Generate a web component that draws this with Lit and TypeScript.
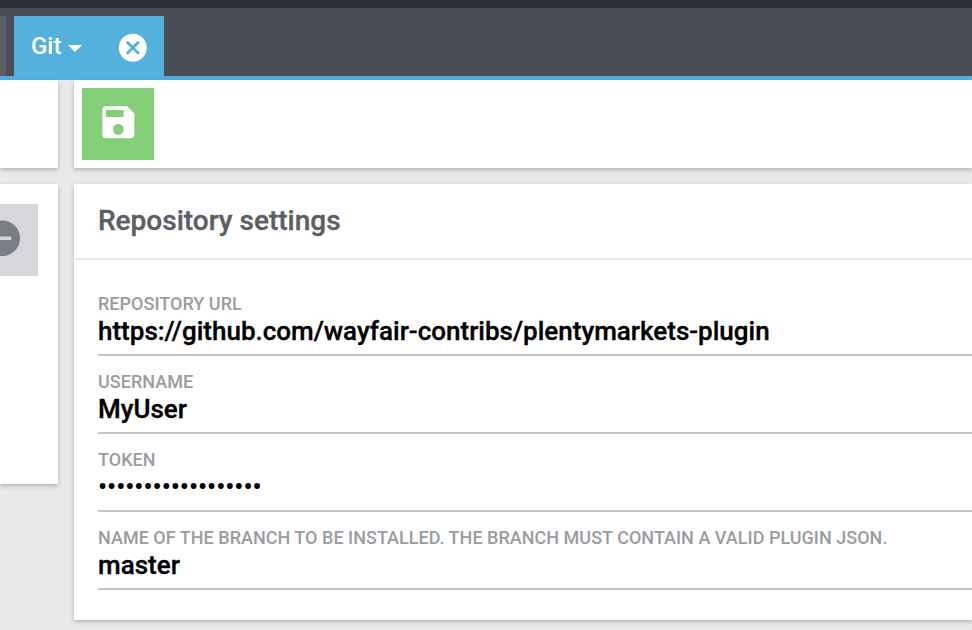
import { LitElement, html, css, svg } from "lit";
import { customElement, property } from "lit/decorators.js";

const ICONS = {
  save: svg`<path d="M17 3H5c-1.11 0-2 .9-2 2v14c0 1.1.89 2 2 2h14c1.1 0 2-.9 2-2V7l-4-4zm-5 16c-1.66 0-3-1.34-3-3s1.34-3 3-3 3 1.34 3 3-1.34 3-3 3zm3-10H5V5h10v4z"/>`,
  cancel: svg`<path d="M12 2C6.47 2 2 6.47 2 12s4.47 10 10 10 10-4.47 10-10S17.53 2 12 2zm5 13.59L15.59 17 12 13.41 8.41 17 7 15.59 10.59 12 7 8.41 8.41 7 12 10.59 15.59 7 17 8.41 13.41 12 17 15.59z"/>`,
  minus: svg`<path d="M12 2C6.48 2 2 6.48 2 12s4.48 10 10 10 10-4.48 10-10S17.52 2 12 2zm5 11H7v-2h10v2z"/>`,
};

@customElement("settings-field")
class SettingsField extends LitElement {
  @property() label = "";
  @property() value = "";
  @property({ type: Boolean, reflect: true }) secret = false;

  static styles = css`
    :host {
      display: block;
      box-sizing: border-box;
      height: 78px;
      padding-top: 16px;
      border-bottom: 2px solid #c5c5c9;
    }
    .label {
      font-size: 18px;
      line-height: 20px;
      letter-spacing: 0.02px;
      color: #9b9ca1;
      text-transform: uppercase;
      white-space: nowrap;
    }
    .value {
      font-size: 26px;
      line-height: 34px;
      color: #000;
      white-space: nowrap;
      -webkit-text-stroke: 0.35px currentColor;
    }
    :host([secret]) .value {
      -webkit-text-stroke: 0;
    }
  `;

  render() {
    return html`
      <div class="label">${this.label}</div>
      <div class="value">${this.secret ? "•".repeat(this.value.length) : this.value}</div>
    `;
  }
}

@customElement("app-root")
class AppRoot extends LitElement {
  static styles = css`
    :host {
      display: flex;
      flex-direction: column;
      box-sizing: border-box;
      width: 100%;
      height: 100vh;
      overflow: hidden;
      background: #e7e8ea;
      font-family: Roboto, "Liberation Sans", sans-serif;
      font-weight: 500;
    }
    svg {
      display: block;
      flex: none;
      fill: currentColor;
    }
    .top {
      flex: none;
      height: 8px;
      background: #2d3038;
    }
    .tabs {
      flex: none;
      display: flex;
      align-items: flex-end;
      gap: 8px;
      height: 68px;
      background: #4a4d55;
      border-bottom: 4px solid #54b0dd;
    }
    .previous {
      width: 6px;
      height: 60px;
      background: #5c5e66;
    }
    .tab {
      display: flex;
      align-items: center;
      box-sizing: border-box;
      width: 150px;
      height: 60px;
      padding-left: 17px;
      background: #54b0dd;
      color: #fff;
      font-size: 24px;
      line-height: 60px;
    }
    .caret {
      margin: 4px 34px 0 7px;
      border: 7px solid transparent;
      border-top-color: #fff;
      border-bottom: 0;
    }
    .close {
      width: 33.6px;
      height: 33.6px;
      margin-top: 4px;
    }
    .body {
      display: grid;
      grid-template-columns: 58px 1fr;
      column-gap: 16px;
      align-items: start;
    }
    .column {
      display: grid;
      gap: 16px;
    }
    .card {
      box-sizing: border-box;
      background: #fff;
      box-shadow: 0 2px 4px rgba(0, 0, 0, 0.22);
    }
    .toolbar {
      height: 88px;
      padding: 8px;
    }
    .button {
      display: flex;
      align-items: center;
      justify-content: center;
      box-sizing: border-box;
      width: 72px;
      height: 72px;
      padding-bottom: 3px;
    }
    .button svg {
      width: 42.67px;
      height: 42.67px;
    }
    .save {
      background: #84cf78;
      color: #fff;
    }
    .tree {
      display: flex;
      justify-content: flex-end;
      height: 300px;
      padding: 20px 20px 0 0;
      overflow: hidden;
    }
    .collapse {
      flex: none;
      background: #d6d7db;
      color: #7b7d84;
    }
    .settings {
      height: 436px;
    }
    .title {
      box-sizing: border-box;
      height: 76px;
      padding-left: 24px;
      border-bottom: 2px solid #e7e8ea;
      margin: 0;
      font-size: 28px;
      font-weight: 500;
      line-height: 74px;
      color: #5c5e66;
      -webkit-text-stroke: 0.35px currentColor;
    }
    .fields {
      padding: 18px 0 0 24px;
    }
  `;

  render() {
    return html`
      <div class="top"></div>
      <nav class="tabs">
        <div class="previous"></div>
        <div class="tab">
          <span class="name">Git</span>
          <span class="caret"></span>
          <svg class="close" viewBox="0 0 24 24">${ICONS.cancel}</svg>
        </div>
      </nav>
      <main class="body">
        <div class="column">
          <div class="card toolbar"></div>
          <div class="card tree">
            <div class="button collapse"><svg viewBox="0 0 24 24">${ICONS.minus}</svg></div>
          </div>
        </div>
        <div class="column">
          <div class="card toolbar">
            <div class="button save"><svg viewBox="0 0 24 24">${ICONS.save}</svg></div>
          </div>
          <section class="card settings">
            <h1 class="title">Repository settings</h1>
            <div class="fields">
              <settings-field label="Repository URL" value="https://github.com/wayfair-contribs/plentymarkets-plugin"></settings-field>
              <settings-field label="Username" value="MyUser"></settings-field>
              <settings-field label="Token" value="xxxxxxxxxxxxxxxxxx" secret></settings-field>
              <settings-field label="Name of the branch to be installed. The branch must contain a valid plugin JSON." value="master"></settings-field>
            </div>
          </section>
        </div>
      </main>
    `;
  }
}
